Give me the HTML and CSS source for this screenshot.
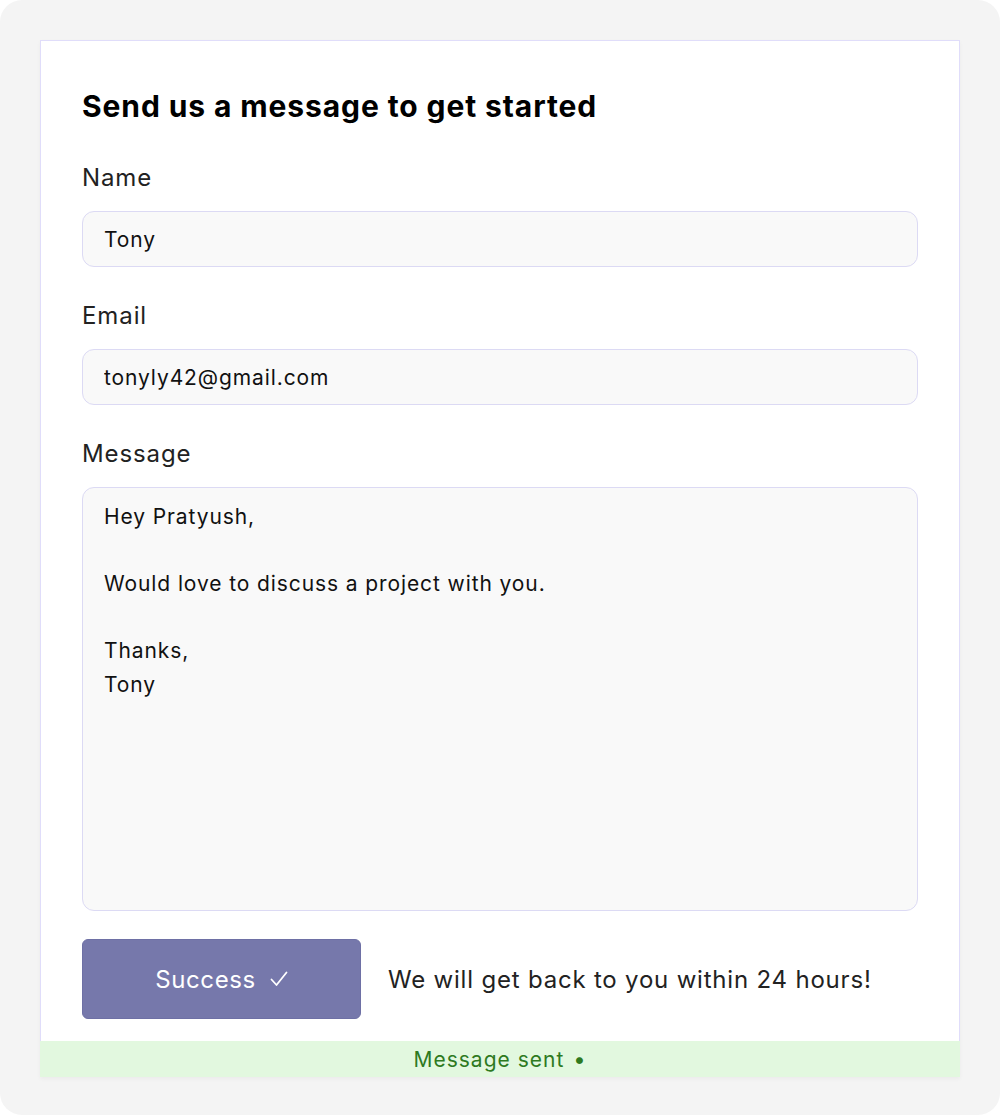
FILE: index.html
```html
<!DOCTYPE html>
<html lang="en">
<head>
<meta charset="utf-8">
<title>Contact</title>
<link rel="stylesheet" href="styles.css">
</head>
<body>
<div class="panel">
  <div class="frame">
    <form class="card">
      <h2 class="title">Send us a message to get started</h2>
      <label class="label" for="name">Name</label>
      <input class="field" id="name" type="text" value="Tony">
      <label class="label" for="email">Email</label>
      <input class="field" id="email" type="email" value="tonyly42@gmail.com">
      <label class="label" for="msg">Message</label>
      <textarea class="field area" id="msg">Hey Pratyush,

Would love to discuss a project with you.

Thanks,
Tony</textarea>
      <div class="actions">
        <button class="btn" type="button">Success <svg class="check" width="18" height="16" viewBox="0 0 18 16"><polyline points="1.5,8.5 6.5,14 16.5,1.5" fill="none" stroke="#fff" stroke-width="1.8" stroke-linecap="round" stroke-linejoin="round"/></svg></button>
        <p class="note">We will get back to you within 24 hours!</p>
      </div>
    </form>
    <div class="status">Message sent <span class="dot">•</span></div>
  </div>
</div>
</body>
</html>
```

FILE: styles.css
```css
html, body {
  margin: 0;
  padding: 0;
  background: #ffffff;
}
body {
  font-family: Inter, "Noto Sans", "Liberation Sans", sans-serif;
  color: #222;
}
.panel {
  height: 1115px;
  box-sizing: border-box;
  background: #f4f4f4;
  border-radius: 22px;
  padding: 40px;
}
.frame {
  width: 920px;
  box-shadow: 0 2px 4px rgba(0, 0, 0, 0.04);
}
.card {
  background: #fff;
  border: 1px solid #e0ddfa;
  border-bottom: none;
  padding: 46px 41px 22px;
  display: flex;
  flex-direction: column;
  margin: 0;
}
.title {
  margin: 0 0 38px;
  font-size: 30px;
  line-height: 38px;
  font-weight: 700;
  color: #000;
  letter-spacing: 0.9px;
}
.label {
  font-size: 24px;
  line-height: 30px;
  color: #222;
  margin-bottom: 18px;
  letter-spacing: 0.9px;
}
.field {
  font-family: inherit;
  font-size: 21px;
  color: #111;
  background: #f9f9f9;
  border: 1px solid #dcdaf4;
  border-radius: 12px;
  height: 56px;
  box-sizing: border-box;
  padding: 0 21px;
  margin: 0 0 34px;
  outline: none;
  letter-spacing: 0.9px;
}
.area {
  height: 424px;
  padding: 12px 21px;
  line-height: 33.6px;
  resize: none;
  margin-bottom: 28px;
}
.actions {
  display: flex;
  align-items: center;
  gap: 27px;
}
.btn {
  width: 279px;
  height: 80px;
  background: #7678ab;
  color: #fff;
  border: 1px solid #6e70a5;
  border-radius: 6px;
  font-family: inherit;
  font-size: 24px;
  letter-spacing: 0.6px;
  padding: 0;
  display: flex;
  align-items: center;
  justify-content: center;
}
.check {
  margin-left: 14px;
}
.note {
  margin: 0;
  font-size: 24px;
  color: #222;
  letter-spacing: 0.8px;
}
.status {
  height: 36px;
  line-height: 36px;
  background: #e2f8df;
  color: #2e7a1f;
  text-align: center;
  font-size: 21px;
  letter-spacing: 1px;
}
.dot {
  margin-left: 2px;
  font-size: 22px;
}
```
